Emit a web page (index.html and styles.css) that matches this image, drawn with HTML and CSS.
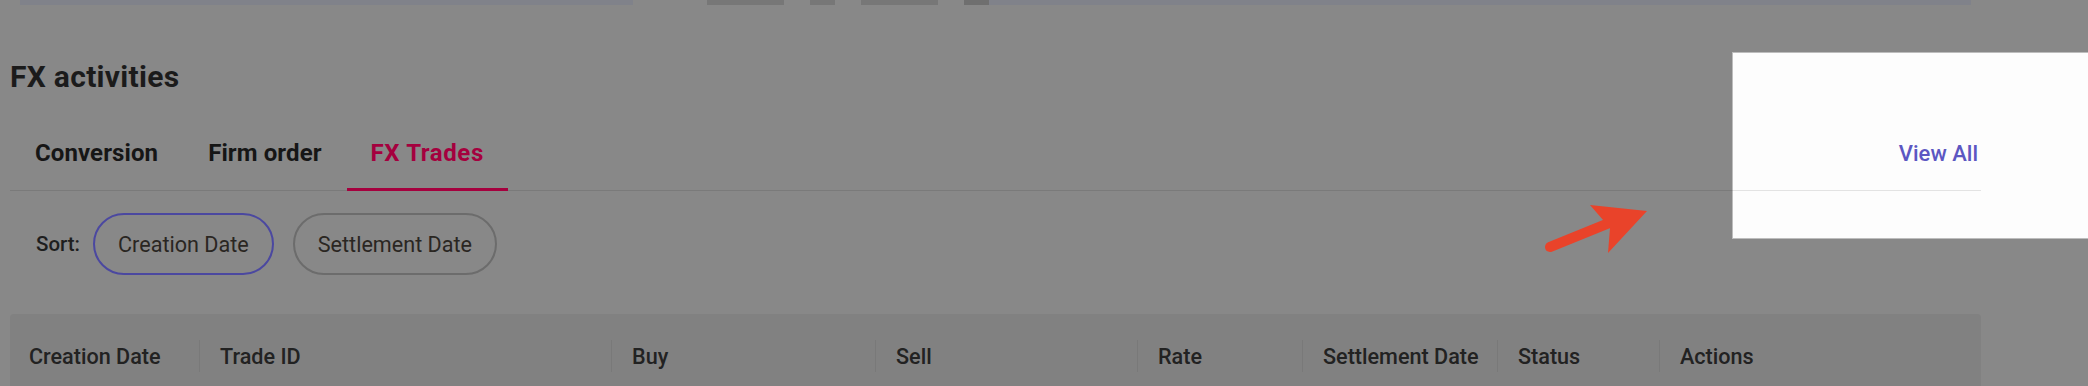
FILE: index.html
```html
<!DOCTYPE html>
<html lang="en">
<head>
<meta charset="utf-8">
<title>FX activities</title>
<link rel="stylesheet" href="styles.css">
</head>
<body>
<div class="page">
  <div class="top-strip">
    <span class="strip-gap s20"></span>
    <span class="strip-bar w613"></span>
    <span class="strip-gap s74"></span>
    <span class="strip-block w77"></span>
    <span class="strip-gap s26"></span>
    <span class="strip-block w25"></span>
    <span class="strip-gap s26"></span>
    <span class="strip-block w77"></span>
    <span class="strip-gap s26"></span>
    <span class="strip-block dark w25"></span>
    <span class="strip-bar w982"></span>
  </div>

  <div class="content">
    <h2 class="title">FX activities</h2>

    <div class="tabrow">
      <nav class="tabs">
        <a class="tab">Conversion</a>
        <a class="tab">Firm order</a>
        <a class="tab active">FX Trades</a>
      </nav>
      <a class="view-all">View All</a>
    </div>

    <div class="sort-row">
      <span class="sort-label">Sort:</span>
      <button class="pill selected">Creation Date</button>
      <button class="pill">Settlement Date</button>
    </div>

    <div class="table-head">
      <div class="th c1"><span>Creation Date</span></div>
      <div class="th c2"><span>Trade ID</span></div>
      <div class="th c3"><span>Buy</span></div>
      <div class="th c4"><span>Sell</span></div>
      <div class="th c5"><span>Rate</span></div>
      <div class="th c6"><span>Settlement Date</span></div>
      <div class="th c7"><span>Status</span></div>
      <div class="th c8"><span>Actions</span></div>
    </div>
  </div>

  <div class="spotlight"></div>

  <svg class="pointer-arrow" width="120" height="60" viewBox="0 0 120 60" aria-hidden="true">
    <line x1="10" y1="47" x2="74" y2="21" stroke="#e9432a" stroke-width="10" stroke-linecap="round"/>
    <polygon points="50,5 107,11 68,53 70,28" fill="#e9432a"/>
  </svg>
</div>
</body>
</html>
```

FILE: styles.css
```css
html, body {
  margin: 0;
  padding: 0;
  height: 386px;
  overflow: hidden;
}

body {
  background: #888888;
  font-family: Roboto, "Liberation Sans", Arial, sans-serif;
  color: #1b1b1b;
}

.page {
  position: relative;
  width: 2088px;
  height: 386px;
}

/* remains of the section above */
.top-strip {
  display: flex;
  height: 5px;
}
.strip-gap { display: block; }
.strip-bar { display: block; background: #80828a; }
.strip-block { display: block; background: #777777; }
.strip-block.dark { background: #6f6f6f; }
.s20 { width: 20px; }
.s26 { width: 26px; }
.s74 { width: 74px; }
.w25 { width: 25px; }
.w77 { width: 77px; }
.w613 { width: 613px; }
.w982 { width: 982px; }

.content {
  width: 1971px;
  padding-left: 10px;
}

.title {
  margin: 55px 0 0;
  font-size: 30px;
  line-height: 34px;
  font-weight: 700;
  letter-spacing: 0.3px;
  color: #1b1b1b;
}

.tabrow {
  position: relative;
  z-index: 1;
  display: flex;
  justify-content: space-between;
  margin-top: 35px;
  border-bottom: 1px solid rgba(0, 0, 0, 0.1);
}

.tabs {
  display: flex;
}

.tab {
  display: block;
  padding: 10px 25px 21px;
  margin-bottom: -1px;
  font-size: 24px;
  line-height: 28px;
  font-weight: 700;
  letter-spacing: 0.1px;
  color: #161616;
  border-bottom: 3px solid transparent;
}

.tab.active {
  padding: 10px 24px 21px;
  letter-spacing: 0.6px;
  color: #a5003e;
  border-bottom-color: #a5003e;
}

.view-all {
  padding: 11px 3px 0 0;
  font-size: 22px;
  line-height: 28px;
  font-weight: 500;
  color: #5c57c2;
}

.sort-row {
  display: flex;
  align-items: center;
  margin-top: 22px;
  padding-left: 26px;
}

.sort-label {
  font-size: 20.5px;
  font-weight: 500;
  color: #1e1e1e;
  margin-right: 13px;
}

.pill {
  box-sizing: border-box;
  height: 62px;
  padding: 0 23px;
  margin-right: 19px;
  border: 2px solid #6c6c6c;
  border-radius: 31px;
  background: transparent;
  font-family: Roboto, "Liberation Sans", Arial, sans-serif;
  font-size: 21.6px;
  color: #2a2622;
}

.pill.selected {
  border-color: #4b48a0;
}

.table-head {
  display: flex;
  margin-top: 39px;
  padding: 26px 0 28px;
  background: #818181;
  border-radius: 4px 4px 0 0;
}

.th {
  display: flex;
  align-items: center;
  box-sizing: border-box;
  height: 32px;
  padding-left: 20px;
  border-left: 1px solid rgba(0, 0, 0, 0.06);
  font-size: 21.6px;
  font-weight: 500;
  color: #222222;
  white-space: nowrap;
}

.th.c1 { width: 189px; padding-left: 19px; border-left: none; }
.th.c2 { width: 412px; }
.th.c3 { width: 264px; }
.th.c4 { width: 262px; }
.th.c5 { width: 165px; }
.th.c6 { width: 195px; }
.th.c7 { width: 162px; }
.th.c8 { flex: 1; }

/* coach-mark highlight around "View All" */
.spotlight {
  position: absolute;
  z-index: 0;
  left: 1732px;
  top: 52px;
  width: 356px;
  height: 187px;
  box-sizing: border-box;
  background: #fdfdfd;
  border: 1px solid #bdbdbd;
  border-right: none;
}

.pointer-arrow {
  position: absolute;
  left: 1540px;
  top: 200px;
}
```
